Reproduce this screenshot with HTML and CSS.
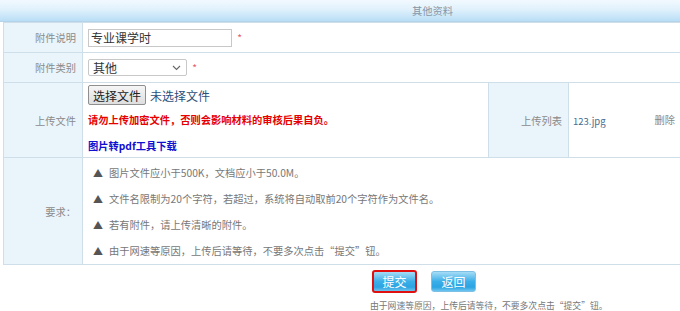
FILE: index.html
```html
<!DOCTYPE html>
<html lang="zh-CN">
  <head>
    <meta charset="UTF-8" />
    <meta name="viewport" content="width=device-width, initial-scale=1.0" />
    <title>其他资料</title>
    <link rel="stylesheet" href="styles.css">
  </head>
  <body>
    <div class="panel-title">其他资料</div>
    <table class="form-table">
      <colgroup>
        <col class="col-label" />
        <col class="col-main" />
        <col class="col-sub" />
        <col class="col-list" />
      </colgroup>
      <tr class="row-short">
        <th>附件说明</th>
        <td colspan="3">
          <input class="txt" type="text" value="专业课学时" />
          <span class="req">*</span>
        </td>
      </tr>
      <tr class="row-short">
        <th>附件类别</th>
        <td colspan="3">
          <span class="select-wrap">
            <select class="sel">
              <option>其他</option>
            </select>
            <svg class="chevron" width="9" height="6" viewBox="0 0 9 6">
              <path d="M1 1l3.5 3.5L8 1" fill="none" stroke="#666" stroke-width="1.1" />
            </svg>
          </span>
          <span class="req">*</span>
        </td>
      </tr>
      <tr class="row-upload">
        <th>上传文件</th>
        <td class="upload-cell">
          <div class="file-line">
            <button class="file-btn" type="button">选择文件</button>
            <span class="file-none">未选择文件</span>
          </div>
          <p class="warn">请勿上传加密文件，否则会影响材料的审核后果自负。</p>
          <a class="tool-link" href="#">图片转pdf工具下载</a>
        </td>
        <th>上传列表</th>
        <td class="list-cell">
          <span class="file-name">123.jpg</span>
          <a class="del" href="#">删除</a>
        </td>
      </tr>
      <tr class="row-notes">
        <th>要求：</th>
        <td colspan="3">
          <ul class="notes">
            <li>图片文件应小于500K，文档应小于50.0M。</li>
            <li>文件名限制为20个字符，若超过，系统将自动取前20个字符作为文件名。</li>
            <li>若有附件，请上传清晰的附件。</li>
            <li>由于网速等原因，上传后请等待，不要多次点击“提交”钮。</li>
          </ul>
        </td>
      </tr>
    </table>

    <div class="actions">
      <button class="btn btn-submit" type="button">提交</button>
      <button class="btn" type="button">返回</button>
    </div>
    <p class="tip">由于网速等原因，上传后请等待，不要多次点击“提交”钮。</p>
  </body>
</html>
```

FILE: styles.css
```css
body {
  margin: 0;
  font-family: "Noto Sans CJK SC", "Noto Sans", sans-serif;
  font-size: 10.25px;
  color: #666;
  background: #fff;
}
.panel-title {
  height: 22px;
  line-height: 21px;
  padding-left: 185px;
  text-align: center;
  color: #8496a8;
  background: linear-gradient(#f2f9fe, #e0f1fc 45%, #b9def6);
  border-bottom: 1px solid #b4d3e8;
  box-sizing: border-box;
}
.form-table {
  margin-left: 3px;
  width: 677px;
  table-layout: fixed;
  border-collapse: collapse;
}
.col-label {
  width: 79px;
}
.col-main {
  width: 406px;
}
.col-sub {
  width: 80px;
}
.col-list {
  width: 112px;
}
th,
td {
  border: 1px solid #cfdfea;
  padding: 0 5px;
}
th {
  background: #eaf4fb;
  color: #8a8a8a;
  font-weight: normal;
  text-align: right;
  padding-right: 6px;
}
.row-short {
  height: 30px;
}
.row-upload {
  height: 75px;
}
.row-notes {
  height: 106px;
}
.txt {
  width: 144px;
  height: 18px;
  box-sizing: border-box;
  border: 1px solid #c8c8c8;
  padding: 0 2px;
  font-family: inherit;
  font-size: 12px;
  color: #333;
  vertical-align: middle;
}
.req {
  color: #e85a6a;
  margin-left: 3px;
  vertical-align: middle;
}
.select-wrap {
  position: relative;
  display: inline-block;
  vertical-align: middle;
}
.sel {
  appearance: none;
  width: 99px;
  height: 17px;
  box-sizing: border-box;
  border: 1px solid #c8c8c8;
  border-radius: 2px;
  background: #fff;
  padding: 0 4px;
  font-family: inherit;
  font-size: 12px;
  line-height: 15px;
  color: #333;
  display: block;
}
.chevron {
  position: absolute;
  right: 6px;
  top: 6px;
}
.upload-cell {
  vertical-align: top;
  padding-top: 2px;
}
.file-line {
  display: flex;
  align-items: center;
  gap: 4px;
  height: 20px;
}
.file-btn {
  height: 20px;
  padding: 0 4px;
  border: 1px solid #8f8f8f;
  border-radius: 2px;
  background: linear-gradient(#f6f6f6, #dedede);
  font-family: inherit;
  font-size: 12px;
  color: #222;
}
.file-none {
  font-size: 12px;
  color: #2b4f7a;
}
.warn {
  margin: 7px 0 0;
  line-height: 16px;
  color: #e60000;
  font-weight: bold;
}
.tool-link {
  display: block;
  margin-top: 10px;
  line-height: 16px;
  color: #1010d0;
  font-weight: bold;
  text-decoration: none;
}
.list-cell {
  padding-left: 4px;
  padding-right: 5px;
}
.list-cell a,
.list-cell span {
  vertical-align: middle;
}
.file-name {
  color: #4a6a8e;
  font-size: 9.5px;
}
.del {
  float: right;
  color: #888;
  text-decoration: none;
}
.notes {
  list-style: none;
  margin: 0;
  padding: 2px 0 0 5px;
}
.notes li {
  line-height: 26px;
  color: #777;
}
.notes li::before {
  content: "▲";
  color: #555;
  font-size: 10px;
  margin-right: 6px;
}
.actions {
  display: flex;
  gap: 14px;
  padding-left: 372px;
  margin-top: 5px;
  align-items: center;
}
.btn {
  width: 45px;
  height: 21px;
  border: 1px solid #7cc0e6;
  border-radius: 3px;
  background: linear-gradient(#a6dcf6, #3aaee8 50%, #2ca4e2 80%, #6cc4ef);
  color: #fff;
  font-family: inherit;
  font-size: 12px;
  padding: 0;
}
.btn-submit {
  height: 23px;
  border: 2px solid #e01010;
}
.tip {
  margin: 5px 0 0 370px;
  color: #777;
  font-size: 8.8px;
  line-height: 16px;
}
```
